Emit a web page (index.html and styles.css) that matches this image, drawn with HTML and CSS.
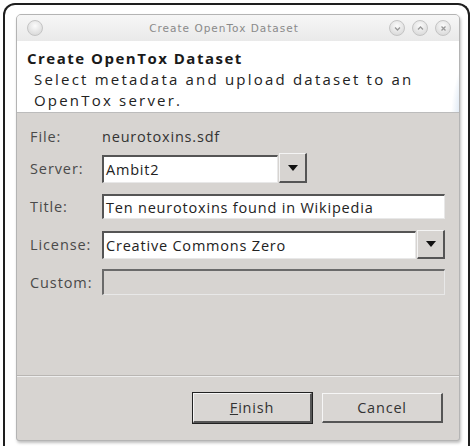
FILE: index.html
```html
<!DOCTYPE html>
<html lang="en">
<head>
    <meta charset="UTF-8">
    <title>Create OpenTox Dataset</title>
    <link rel="stylesheet" href="styles.css">
</head>
<body>
    <div class="frame">
        <div class="window">
            <div class="titlebar">
                <span class="tb-btn"></span>
                <span class="tb-title">Create OpenTox Dataset</span>
                <div class="tb-controls">
                    <span class="tb-btn small">
                        <svg width="9" height="9" viewBox="0 0 9 9"><path d="M2 3.5 L4.5 6 L7 3.5" fill="none" stroke="#999" stroke-width="1.3"/></svg>
                    </span>
                    <span class="tb-btn small">
                        <svg width="9" height="9" viewBox="0 0 9 9"><path d="M2 5.5 L4.5 3 L7 5.5" fill="none" stroke="#999" stroke-width="1.3"/></svg>
                    </span>
                    <span class="tb-btn small">
                        <svg width="9" height="9" viewBox="0 0 9 9"><path d="M2.5 2.5 L6.5 6.5 M6.5 2.5 L2.5 6.5" fill="none" stroke="#999" stroke-width="1.3"/></svg>
                    </span>
                </div>
            </div>
            <div class="header">
                <h1>Create OpenTox Dataset</h1>
                <p class="sub">Select metadata and upload dataset to an</p>
                <p class="sub">OpenTox server.</p>
            </div>
            <div class="content">
                <div class="row row-file">
                    <label>File:</label>
                    <span class="value">neurotoxins.sdf</span>
                </div>
                <div class="row row-server">
                    <label>Server:</label>
                    <div class="combo short">
                        <div class="field">Ambit2</div>
                        <div class="arrow"></div>
                    </div>
                </div>
                <div class="row row-title">
                    <label>Title:</label>
                    <div class="field wide">Ten neurotoxins found in Wikipedia</div>
                </div>
                <div class="row row-license">
                    <label>License:</label>
                    <div class="combo long">
                        <div class="field">Creative Commons Zero</div>
                        <div class="arrow"></div>
                    </div>
                </div>
                <div class="row row-custom">
                    <label>Custom:</label>
                    <div class="field wide disabled"></div>
                </div>
            </div>
            <div class="footer">
                <button class="btn default"><u>F</u>inish</button>
                <button class="btn">Cancel</button>
            </div>
        </div>
    </div>
</body>
</html>
```

FILE: styles.css
```css
body {
    margin: 0;
    background: #fff;
    font-family: "Open Sans", "DejaVu Sans", sans-serif;
    color: #333;
    overflow: hidden;
}
.frame {
    margin: 3px 0 0 3px;
    width: 452px;
    height: 432px;
    border: 2px solid #1e1e1e;
    border-bottom: none;
    border-radius: 12px 12px 0 0;
    padding: 9px 0 0 11px;
}
.window {
    width: 442px;
    height: 425px;
    border: 1px solid #b4b4b4;
    border-radius: 5px 5px 3px 3px;
    box-shadow: 1px 2px 3px rgba(0, 0, 0, 0.25);
    background: #d7d4d1;
    display: flex;
    flex-direction: column;
    overflow: hidden;
}
.titlebar {
    height: 26px;
    flex: none;
    display: flex;
    align-items: center;
    padding: 0 8px 0 10px;
    background: linear-gradient(#f6f6f6, #e9e9e9);
}
.tb-title {
    flex: 1;
    text-align: center;
    padding-left: 16px;
    font-family: "DejaVu Sans", sans-serif;
    font-size: 10.5px;
    color: #8a8a8a;
    letter-spacing: 1px;
}
.tb-btn {
    width: 16px;
    height: 16px;
    border-radius: 50%;
    background: radial-gradient(circle at 50% 35%, #fbfbfb, #d2d2d2);
    border: 1px solid #c4c4c4;
    display: flex;
    align-items: center;
    justify-content: center;
    box-sizing: border-box;
}
.tb-controls {
    display: flex;
    gap: 7px;
}
.header {
    height: 72px;
    flex: none;
    background: radial-gradient(ellipse 70px 110px at 490px 75px, #fff 60%, #dce7f3 66%, #fff 80%), #fff;
    border-bottom: 1px solid #bcbcbc;
    padding: 0 10px;
    box-sizing: border-box;
}
.header h1 {
    margin: 0;
    padding-top: 7px;
    font-size: 15px;
    line-height: 21px;
    font-weight: 700;
    letter-spacing: 1.5px;
    color: #1a1a1a;
}
.header .sub {
    margin: 0 0 0 7px;
    font-size: 15px;
    line-height: 20.5px;
    letter-spacing: 2.2px;
    color: #222;
    white-space: nowrap;
}
.content {
    flex: 1;
    padding: 11px 14px 0 13px;
    display: flex;
    flex-direction: column;
}
.row {
    display: flex;
    align-items: center;
    font-size: 14.5px;
    letter-spacing: 0.8px;
}
.row label {
    width: 72px;
    flex: none;
    color: #4a4a4a;
    letter-spacing: 0.9px;
}
.row-file { height: 24px; margin-bottom: 5px; }
.row-server { height: 30px; margin-bottom: 11px; }
.row-title { height: 25px; margin-bottom: 11px; }
.row-license { height: 29px; margin-bottom: 10px; }
.row-custom { height: 26px; }
.value {
    color: #333;
}
.field {
    background: #fff;
    border-top: 2px solid #555;
    border-left: 2px solid #555;
    border-right: 1px solid #e8e8e8;
    border-bottom: 1px solid #e8e8e8;
    box-sizing: border-box;
    padding-left: 2px;
    display: flex;
    align-items: center;
    color: #222;
}
.field.wide {
    width: 344px;
    height: 25px;
}
.field.disabled {
    background: #d7d4d1;
    border-top-color: #6a6a6a;
    border-left-color: #6a6a6a;
    height: 26px;
}
.combo {
    display: flex;
    align-items: stretch;
    height: 30px;
}
.combo .field {
    flex: 1;
    margin: 2px 1px 0 0;
}
.combo.short { width: 205px; }
.combo.long { width: 344px; height: 29px; }
.combo.long .field { margin-top: 1px; }
.arrow {
    width: 28px;
    flex: none;
    background: #d7d4d1;
    border-top: 1px solid #f4f4f4;
    border-left: 1px solid #f4f4f4;
    border-right: 2px solid #555;
    border-bottom: 2px solid #555;
    box-sizing: border-box;
    display: flex;
    align-items: center;
    justify-content: center;
}
.arrow::after {
    content: "";
    border-left: 5px solid transparent;
    border-right: 5px solid transparent;
    border-top: 6px solid #111;
}
.footer {
    height: 65px;
    flex: none;
    border-top: 1px solid #b9b6b3;
    box-shadow: inset 0 1px 0 #eeeeee;
    display: flex;
    justify-content: flex-end;
    align-items: flex-start;
    gap: 9px;
    padding: 17px 16px 0 0;
    box-sizing: border-box;
}
.btn {
    height: 30px;
    font-family: inherit;
    font-size: 14.5px;
    letter-spacing: 0.8px;
    color: #333;
    background: #d9d6d3;
    border-top: 1px solid #f6f6f6;
    border-left: 1px solid #f6f6f6;
    border-right: 2px solid #555;
    border-bottom: 2px solid #555;
    width: 121px;
    padding: 0;
}
.btn.default {
    outline: 1px solid #222;
    width: 119px;
    margin-right: 1px;
}
```
